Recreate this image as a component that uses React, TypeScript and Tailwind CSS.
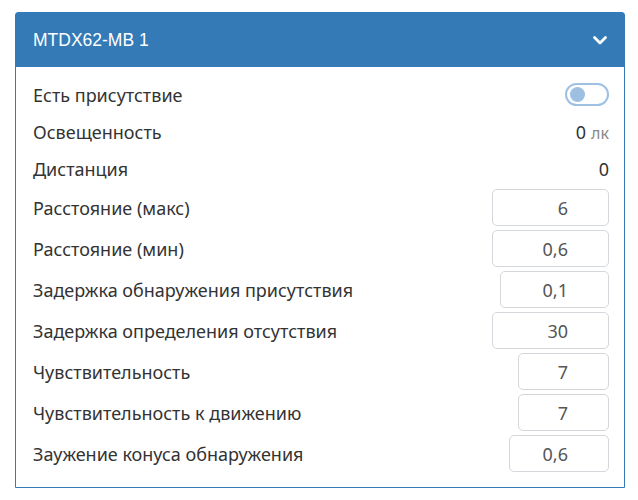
type Row =
  | { kind: 'toggle'; label: string }
  | { kind: 'text'; label: string; value: string; unit?: string }
  | { kind: 'input'; label: string; value: string; width: number };

const rows: Row[] = [
  { kind: 'toggle', label: 'Есть присутствие' },
  { kind: 'text', label: 'Освещенность', value: '0', unit: 'лк' },
  { kind: 'text', label: 'Дистанция', value: '0' },
  { kind: 'input', label: 'Расстояние (макс)', value: '6', width: 117 },
  { kind: 'input', label: 'Расстояние (мин)', value: '0,6', width: 117 },
  { kind: 'input', label: 'Задержка обнаружения присутствия', value: '0,1', width: 109 },
  { kind: 'input', label: 'Задержка определения отсутствия', value: '30', width: 117 },
  { kind: 'input', label: 'Чувствительность', value: '7', width: 91 },
  { kind: 'input', label: 'Чувствительность к движению', value: '7', width: 91 },
  { kind: 'input', label: 'Заужение конуса обнаружения', value: '0,6', width: 100 },
];

function Toggle() {
  return (
    <div className="w-[44px] h-[23px] rounded-full border-2 border-[#9ec0e3] flex items-center px-[3px]">
      <div className="w-[15px] h-[15px] rounded-full bg-[#9dbfe1]" />
    </div>
  );
}

function Field({ row }: { row: Row }) {
  if (row.kind === 'input') {
    return (
      <div className="h-[37px] flex items-center justify-between">
        <span>{row.label}</span>
        <div
          className="h-[37px] border border-[#d4d7dc] rounded-[5px] flex items-center justify-end pr-[40px] text-[#555]"
          style={{ width: row.width }}
        >
          {row.value}
        </div>
      </div>
    );
  }
  return (
    <div className="h-[33px] flex items-center justify-between">
      <span>{row.label}</span>
      {row.kind === 'toggle' ? (
        <Toggle />
      ) : (
        <span>
          {row.value}
          {row.unit && <span className="text-[16px] text-[#888] ml-[5px]">{row.unit}</span>}
        </span>
      )}
    </div>
  );
}

export default function App() {
  return (
    <div className="w-[638px] h-[500px] bg-white pt-[12px] pl-[15px]">
      <div className="w-[610px] border border-[#337ab7] rounded-t-[3px]">
        <div className="h-[54px] bg-[#337ab7] text-white flex items-center justify-between pl-[17px] pr-[16px]">
          <span className="text-[17.5px] font-['Liberation_Sans',Arial,sans-serif]">MTDX62-MB 1</span>
          <svg width="16" height="16" viewBox="0 0 16 16" fill="none">
            <path d="M2.5 5.5 L8 11 L13.5 5.5" stroke="white" strokeWidth="2.8" strokeLinecap="round" strokeLinejoin="round" />
          </svg>
        </div>
        <div className="pt-[11px] pb-[15px] pl-[17px] pr-[15px] flex flex-col gap-[4px] text-[18px] leading-none text-[#333] font-['Noto_Sans',sans-serif]">
          {rows.map((r) => (
            <Field key={r.label} row={r} />
          ))}
        </div>
      </div>
    </div>
  );
}
